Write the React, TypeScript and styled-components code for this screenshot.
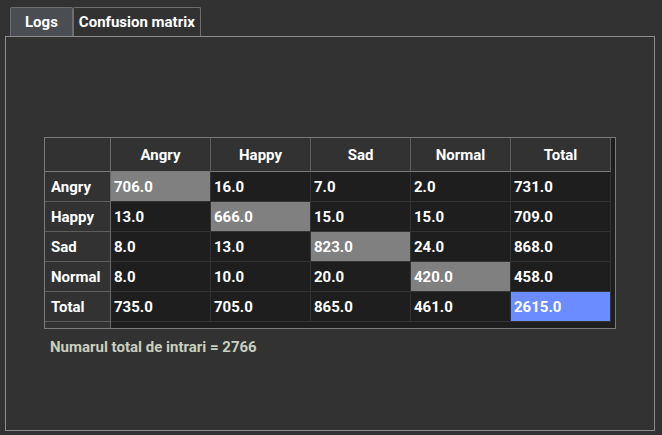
import styled, { createGlobalStyle } from "styled-components";

const GlobalStyle = createGlobalStyle`
    html, body {
        margin: 0;
        padding: 0;
        background: #323232;
    }
    body {
        font-family: Roboto, "Liberation Sans", sans-serif;
        color: #fff;
    }
`;

const LABELS = ["Angry", "Happy", "Sad", "Normal"];

const MATRIX: number[][] = [
    [706, 16, 7, 2, 731],
    [13, 666, 15, 15, 709],
    [8, 13, 823, 24, 868],
    [8, 10, 20, 420, 458],
    [735, 705, 865, 461, 2615],
];

const TOTAL_ENTRIES = 2766;

const App = () => {
    const rows = [...LABELS, "Total"];

    const cellKind = (r: number, c: number) => {
        if (r === 4 && c === 4) return "total";
        if (r === c) return "diag";
        return "plain";
    };

    return (
        <Page>
            <GlobalStyle />
            <TabBar>
                <Tab $active={false}>Logs</Tab>
                <Tab $active={true}>Confusion matrix</Tab>
            </TabBar>
            <Pane>
                <TableFrame>
                    <Table>
                        <thead>
                            <tr>
                                <Corner />
                                {rows.map((label) => (
                                    <ColHeader key={label}>{label}</ColHeader>
                                ))}
                            </tr>
                        </thead>
                        <tbody>
                            {MATRIX.map((row, r) => (
                                <tr key={rows[r]}>
                                    <RowHeader>{rows[r]}</RowHeader>
                                    {row.map((v, c) => (
                                        <Cell key={c} $kind={cellKind(r, c)}>
                                            {v.toFixed(1)}
                                        </Cell>
                                    ))}
                                </tr>
                            ))}
                            <tr>
                                <FillerHeader />
                                <FillerCell colSpan={5} />
                            </tr>
                        </tbody>
                    </Table>
                </TableFrame>
                <Summary>Numarul total de intrari = {TOTAL_ENTRIES}</Summary>
            </Pane>
        </Page>
    );
};

export default App;

const Page = styled.div`
    width: 662px;
    height: 435px;
    box-sizing: border-box;
    padding: 7px 7px 4px 5px;
    display: flex;
    flex-direction: column;
`;

const TabBar = styled.div`
    display: flex;
    flex-direction: row;
    padding-left: 5px;
    height: 29px;
`;

const Tab = styled.div<{ $active: boolean }>`
    box-sizing: border-box;
    height: 29px;
    padding: 0 ${(p) => (p.$active ? "5px" : "14px")};
    display: flex;
    align-items: center;
    justify-content: center;
    font-size: 15px;
    font-weight: 700;
    color: #fff;
    background: ${(p) => (p.$active ? "#323232" : "#4a4d52")};
    border: 1px solid #6e6e6e;
    border-bottom: none;
    border-radius: 2px 2px 0 0;
`;

const Pane = styled.div`
    flex: 1;
    box-sizing: border-box;
    width: 650px;
    border: 1px solid #8c8c8c;
    padding: 100px 0 0 38px;
    display: flex;
    flex-direction: column;
    align-items: flex-start;
`;

const TableFrame = styled.div`
    box-sizing: border-box;
    width: 572px;
    height: 192px;
    border: 1px solid #7a7a7a;
    background: #1e1e1e;
`;

const Table = styled.table`
    border-collapse: separate;
    border-spacing: 0;
    table-layout: fixed;
    font-size: 15px;
    font-weight: 700;
    color: #fff;
`;

const HeaderBase = styled.th`
    box-sizing: border-box;
    background: #323232;
    border-right: 1px solid #5e5e5e;
    border-bottom: 1px solid #5e5e5e;
    padding: 0;
    font-weight: 700;
`;

const Corner = styled(HeaderBase)`
    width: 66px;
    height: 34px;
    border-right-color: #6a6a6a;
    border-bottom-color: #7a7a7a;
`;

const ColHeader = styled(HeaderBase)`
    width: 100px;
    height: 34px;
    text-align: center;
    border-bottom-color: #7a7a7a;
`;

const RowHeader = styled(HeaderBase)`
    width: 66px;
    height: 30px;
    text-align: left;
    padding-left: 6px;
    border-right-color: #6a6a6a;
`;

const Cell = styled.td<{ $kind: "plain" | "diag" | "total" }>`
    box-sizing: border-box;
    width: 100px;
    height: 30px;
    padding: 0 0 0 3px;
    text-align: left;
    border-right: 1px solid #333333;
    border-bottom: 1px solid #333333;
    background: ${(p) =>
        p.$kind === "total" ? "#6a8cff" : p.$kind === "diag" ? "#808080" : "#1e1e1e"};
`;

const FillerHeader = styled.th`
    height: 6px;
    padding: 0;
    background: #323232;
    border-right: 1px solid #6a6a6a;
`;

const FillerCell = styled.td`
    height: 6px;
    padding: 0;
    background: #1e1e1e;
`;

const Summary = styled.div`
    margin-top: 9px;
    padding-left: 6px;
    font-size: 15px;
    font-weight: 700;
    color: #c7d0bf;
`;
